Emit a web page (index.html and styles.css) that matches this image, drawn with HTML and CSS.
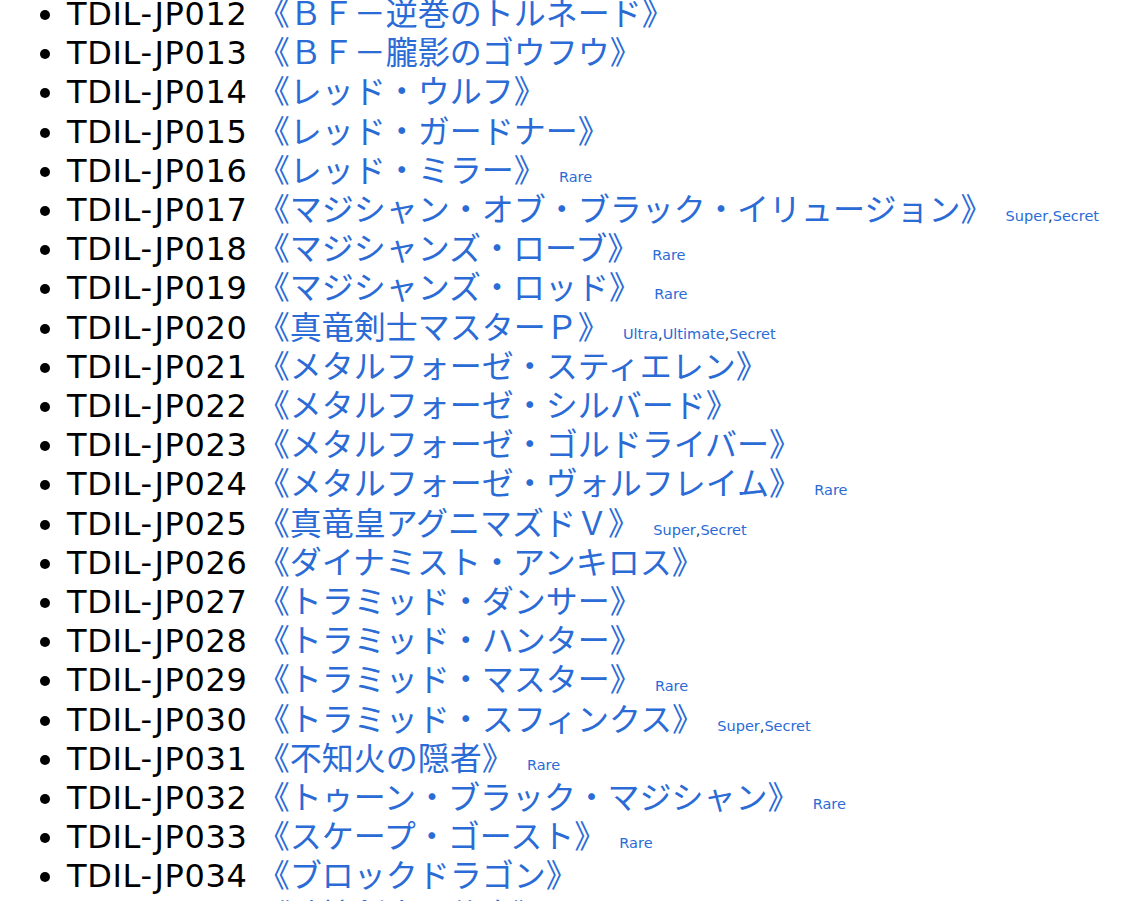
FILE: index.html
```html
<!DOCTYPE html>
<html lang="ja">
<head>
  <meta charset="UTF-8" />
  <title>TDIL カードリスト</title>
  <link rel="stylesheet" href="styles.css">
</head>
<body>

  <!-- card list, continued -->
  <ul class="cards">
    <li><span class="code">TDIL-JP012</span> <a href="#">《ＢＦ－逆巻のトルネード》</a></li>
    <li><span class="code">TDIL-JP013</span> <a href="#">《ＢＦ－朧影のゴウフウ》</a></li>
    <li><span class="code">TDIL-JP014</span> <a href="#">《レッド・ウルフ》</a></li>
    <li><span class="code">TDIL-JP015</span> <a href="#">《レッド・ガードナー》</a></li>
    <li><span class="code">TDIL-JP016</span> <a href="#">《レッド・ミラー》</a> <span class="rarity"><a href="#">Rare</a></span></li>
    <li><span class="code">TDIL-JP017</span> <a href="#">《マジシャン・オブ・ブラック・イリュージョン》</a> <span class="rarity"><a href="#">Super</a>,<a href="#">Secret</a></span></li>
    <li><span class="code">TDIL-JP018</span> <a href="#">《マジシャンズ・ローブ》</a> <span class="rarity"><a href="#">Rare</a></span></li>
    <li><span class="code">TDIL-JP019</span> <a href="#">《マジシャンズ・ロッド》</a> <span class="rarity"><a href="#">Rare</a></span></li>
    <li><span class="code">TDIL-JP020</span> <a href="#">《真竜剣士マスターＰ》</a> <span class="rarity"><a href="#">Ultra</a>,<a href="#">Ultimate</a>,<a href="#">Secret</a></span></li>
    <li><span class="code">TDIL-JP021</span> <a href="#">《メタルフォーゼ・スティエレン》</a></li>
    <li><span class="code">TDIL-JP022</span> <a href="#">《メタルフォーゼ・シルバード》</a></li>
    <li><span class="code">TDIL-JP023</span> <a href="#">《メタルフォーゼ・ゴルドライバー》</a></li>
    <li><span class="code">TDIL-JP024</span> <a href="#">《メタルフォーゼ・ヴォルフレイム》</a> <span class="rarity"><a href="#">Rare</a></span></li>
    <li><span class="code">TDIL-JP025</span> <a href="#">《真竜皇アグニマズドＶ》</a> <span class="rarity"><a href="#">Super</a>,<a href="#">Secret</a></span></li>
    <li><span class="code">TDIL-JP026</span> <a href="#">《ダイナミスト・アンキロス》</a></li>
    <li><span class="code">TDIL-JP027</span> <a href="#">《トラミッド・ダンサー》</a></li>
    <li><span class="code">TDIL-JP028</span> <a href="#">《トラミッド・ハンター》</a></li>
    <li><span class="code">TDIL-JP029</span> <a href="#">《トラミッド・マスター》</a> <span class="rarity"><a href="#">Rare</a></span></li>
    <li><span class="code">TDIL-JP030</span> <a href="#">《トラミッド・スフィンクス》</a> <span class="rarity"><a href="#">Super</a>,<a href="#">Secret</a></span></li>
    <li><span class="code">TDIL-JP031</span> <a href="#">《不知火の隠者》</a> <span class="rarity"><a href="#">Rare</a></span></li>
    <li><span class="code">TDIL-JP032</span> <a href="#">《トゥーン・ブラック・マジシャン》</a> <span class="rarity"><a href="#">Rare</a></span></li>
    <li><span class="code">TDIL-JP033</span> <a href="#">《スケープ・ゴースト》</a> <span class="rarity"><a href="#">Rare</a></span></li>
    <li><span class="code">TDIL-JP034</span> <a href="#">《ブロックドラゴン》</a></li>
    <li><span class="code">TDIL-JP035</span> <a href="#">《破壊剣士の伴竜》</a></li>
  </ul>

</body>
</html>
```

FILE: styles.css
```css
body {
  margin: 0;
  padding: 0;
  background-color: #ffffff;
  color: #000000;
  font-family: 'DejaVu Sans', 'Noto Sans CJK JP', sans-serif;
  overflow: hidden;
}

.cards {
  margin: -5px 0 0 0;
  padding-left: 67px;
  font-size: 32px;
  line-height: 39.2px;
}

.code {
  letter-spacing: 0.65px;
}

a {
  color: #2a6bd6;
  text-decoration: none;
}

.rarity {
  margin-left: 3px;
  font-size: 14.5px;
  line-height: 1;
  color: #333333;
}
```
